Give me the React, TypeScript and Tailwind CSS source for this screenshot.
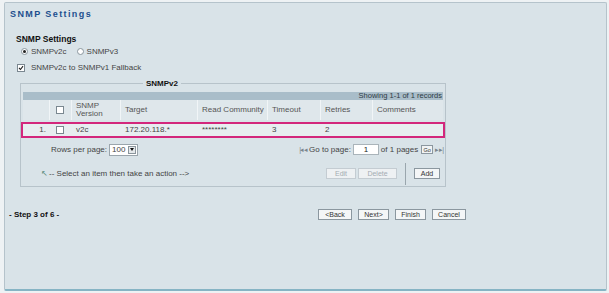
import React from 'react';

const font = { fontFamily: '"Liberation Sans", Arial, sans-serif' };

const Btn = ({ label, disabled = false, w }: { label: string; disabled?: boolean; w: string }) => (
  <div
    className={`h-[11px] ${w} flex items-center justify-center border text-[7px] leading-none ${
      disabled ? 'border-[#c4ccd2] bg-[#eef1f3] text-[#a4acb2]' : 'border-[#8b979f] bg-[#f4f6f7] text-[#333]'
    }`}
  >
    {label}
  </div>
);

const Check = ({ checked = false }: { checked?: boolean }) => (
  <div className="w-[8px] h-[8px] border border-[#7a8790] bg-white flex items-center justify-center">
    {checked && (
      <svg width="6" height="6" viewBox="0 0 6 6">
        <path d="M1 3 L2.5 4.5 L5 1.2" stroke="#222" strokeWidth="1.1" fill="none" />
      </svg>
    )}
  </div>
);

const Radio = ({ checked = false }: { checked?: boolean }) => (
  <div className="w-[7px] h-[7px] rounded-full border border-[#8a969e] bg-white flex items-center justify-center">
    {checked && <div className="w-[3px] h-[3px] rounded-full bg-[#222]" />}
  </div>
);

export default function App() {
  const cols = [
    { w: 'w-[27px]', label: '' },
    { w: 'w-[22px]', label: 'chk' },
    { w: 'w-[49px]', label: 'SNMP\nVersion' },
    { w: 'w-[77px]', label: 'Target' },
    { w: 'w-[70px]', label: 'Read Community' },
    { w: 'w-[53px]', label: 'Timeout' },
    { w: 'w-[52px]', label: 'Retries' },
    { w: 'flex-1', label: 'Comments' },
  ];
  const row = ['1.', 'chk', 'v2c', '172.20.118.*', '********', '3', '2', ''];

  return (
    <div style={font} className="w-[609px] h-[293px] bg-[#eef2f4] pt-[2px] pl-[4px] pr-[2px] pb-[2px] text-[8px] text-[#333]">
      <div className="h-full flex flex-col bg-[#d9e3e8] border border-[#b5c3cb] border-b-2 border-b-[#86b4c4] rounded-[2px]">
        <div className="h-[22px] pl-[5px] pt-[5px] text-[9px] font-bold tracking-[1.4px] text-[#1c4f8e]">SNMP Settings</div>

        <div className="pl-[11px] pt-[8px] text-[8.5px] font-bold text-[#111]">SNMP Settings</div>

        <div className="pl-[16px] pt-0 flex items-center gap-[3px] text-[#444]">
          <Radio checked />
          <span>SNMPv2c</span>
          <span className="w-[4px]" />
          <Radio />
          <span>SNMPv3</span>
        </div>

        <div className="pl-[12px] pt-[4px] flex items-center gap-[6px] text-[#444]">
          <Check checked />
          <span>SNMPv2c to SNMPv1 Fallback</span>
        </div>

        <fieldset className="ml-[15px] mt-[5px] w-[426px] h-[108px] border border-[#b7c3ca] px-[2px] pb-0 pt-0">
          <legend className="ml-[120px] px-[3px] text-[8px] font-bold text-[#111] leading-[10px]">SNMPv2</legend>

          <div className="h-[8px] mt-[3px] bg-[#a9bdc9] flex items-center justify-end pr-[1px] text-[7.5px] text-[#2e3b44]">
            Showing 1-1 of 1 records
          </div>

          <div className="h-[20px] flex bg-[#dfe7eb] text-[#555]">
            {cols.map((c, i) => (
              <div key={i} className={`${c.w} h-full flex items-center border-r border-[#f1f5f7] last:border-r-0 pl-[4px]`}>
                {c.label === 'chk' ? (
                  <div className="pl-[2px]"><Check /></div>
                ) : (
                  <span className="whitespace-pre leading-[8px]">{c.label}</span>
                )}
              </div>
            ))}
          </div>

          <div className="mt-[2px] -mx-[2px] h-[16px] border-2 border-[#d3277c] flex bg-[#e7edf0] text-[#444]">
            {row.map((v, i) => (
              <div
                key={i}
                className={`${cols[i].w} ${i === 0 ? 'justify-end pr-[4px] pl-0' : 'pl-[4px]'} h-full flex items-center`}
              >
                {v === 'chk' ? <div className="pl-[2px]"><Check /></div> : <span>{v}</span>}
              </div>
            ))}
          </div>

          <div className="mt-[6px] flex items-center">
            <div className="ml-[28px] flex items-center gap-[1px] text-[#444]">
              <span>Rows per page:</span>
              <div className="ml-[1px] h-[12px] w-[29px] bg-white border border-[#9aa5ac] flex items-center justify-between pl-[2px] pr-[1px]">
                <span>100</span>
                <div className="w-[8px] h-[8px] bg-[#e5e9eb] border border-[#8a959c] flex items-center justify-center">
                  <div className="w-0 h-0 border-l-[2.5px] border-r-[2.5px] border-t-[3px] border-l-transparent border-r-transparent border-t-[#111]" />
                </div>
              </div>
            </div>
            <div className="ml-auto mr-[0px] flex items-center text-[#444]">
              <span className="text-[#7a858c] text-[7px] tracking-[-1px] mr-[2px]">|◂ ◂</span>
              <span>Go to page:</span>
              <div className="ml-[2px] h-[11px] w-[26px] bg-white border border-[#aab4ba] flex items-center justify-center text-[#222]">1</div>
              <span className="ml-[2px]">of 1 pages</span>
              <div className="ml-[3px] h-[9px] w-[12px] bg-[#f1f3f4] border border-[#8b979f] flex items-center justify-center text-[5.5px] text-[#333]">Go</div>
              <span className="ml-[2px] text-[#7a858c] text-[7px] tracking-[-1px]">▸ ▸|</span>
            </div>
          </div>

          <div className="mt-[7px] flex items-center">
            <div className="ml-[18px] text-[#444] flex items-center gap-[1px]">
              <span className="text-[#5a8a7a]">↖</span>
              <span>-- Select an item then take an action --&gt;</span>
            </div>
            <div className="ml-auto flex items-center gap-[2px] pr-[3px]">
              <Btn label="Edit" disabled w="w-[30px]" />
              <Btn label="Delete" disabled w="w-[39px]" />
              <div className="w-px h-[22px] bg-[#9aa6ad] mx-[6px]" />
              <Btn label="Add" w="w-[26px]" />
            </div>
          </div>
        </fieldset>

        <div className="mt-[22px] flex items-center">
          <div className="pl-[4px] w-[313px] text-[8px] font-bold text-[#111]">- Step 3 of 6 -</div>
          <div className="flex items-center gap-[6px]">
            <Btn label="<Back" w="w-[34px]" />
            <Btn label="Next>" w="w-[31px]" />
            <Btn label="Finish" w="w-[31px]" />
            <Btn label="Cancel" w="w-[34px]" />
          </div>
        </div>
      </div>
    </div>
  );
}
